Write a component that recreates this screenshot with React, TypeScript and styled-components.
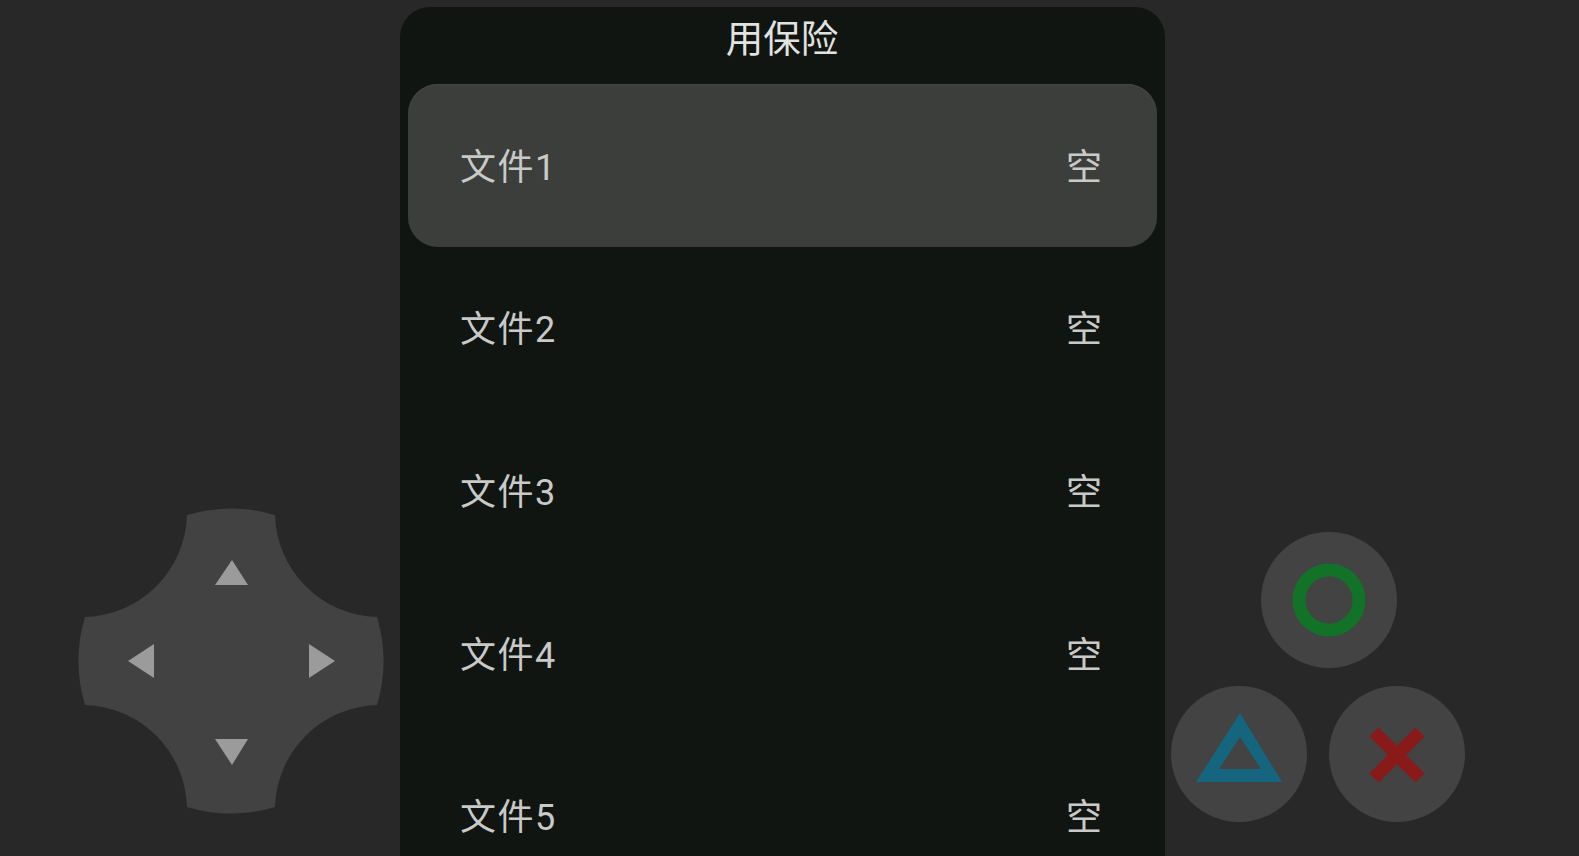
import React from 'react';
import styled, { createGlobalStyle } from 'styled-components';

const GlobalStyle = createGlobalStyle`
  html, body {
    margin: 0;
    height: 100%;
    background: #282828;
    overflow: hidden;
  }
`;

const Screen = styled.div`
  display: grid;
  grid-template-columns: 400px 765px 1fr;
  height: 856px;
  background: #282828;
  font-family: Roboto, "Noto Sans CJK SC", sans-serif;
  overflow: hidden;
`;

const LeftSide = styled.div`
  display: flex;
  align-items: flex-end;
  padding: 0 0 42px 78px;
`;

const RightSide = styled.div`
  display: flex;
  flex-direction: column;
  justify-content: flex-end;
  gap: 18px;
  padding: 0 0 34px 6px;
`;

const Panel = styled.div`
  margin-top: 7px;
  height: 849px;
  background: #101512;
  border-radius: 30px 30px 0 0;
  padding: 0 8px;
  box-sizing: border-box;
  overflow: hidden;
`;

const Title = styled.div`
  height: 77px;
  padding: 10px 1px 0 0;
  box-sizing: border-box;
  text-align: center;
  font-size: 37.5px;
  line-height: 44px;
  color: #e2e3e1;
`;

const Row = styled.div<{ $selected?: boolean }>`
  display: flex;
  justify-content: space-between;
  align-items: center;
  flex: none;
  height: 162.6px;
  padding: 0 55px 3px 52px;
  box-sizing: border-box;
  border-radius: 30px;
  font-size: 36px;
  color: #c9cac8;
  background: ${(p) => (p.$selected ? '#3c3e3b' : 'transparent')};
  box-shadow: ${(p) => (p.$selected ? 'inset 0 1px 0 #464845' : 'none')};
`;

const FileName = styled.span`
  letter-spacing: 1.5px;
`;

const Pad = styled.svg`
  display: block;
  width: 306px;
  height: 306px;
`;

const ButtonRow = styled.div<{ $offset?: number }>`
  display: flex;
  gap: 22px;
  margin-left: ${(p) => p.$offset || 0}px;
`;

const RoundButton = styled.svg`
  display: block;
  flex: none;
  width: 136px;
  height: 136px;
`;

const files = ['文件1', '文件2', '文件3', '文件4', '文件5'];

const App = () => (
  <Screen>
    <GlobalStyle />
    <LeftSide>
      <Pad viewBox="-153 -153 306 306">
        <path
          d="M-44 -146A153 153 0 0 1 44 -146A105 105 0 0 0 146 -44A153 153 0 0 1 146 44A105 105 0 0 0 44 146A153 153 0 0 1 -44 146A105 105 0 0 0 -146 44A153 153 0 0 1 -146 -44A105 105 0 0 0 -44 -146Z"
          fill="#414241"
        />
        <g fill="#9b9b9c">
          <polygon points="1,-101 -16,-76 17,-76" />
          <polygon points="-103,0 -77,-17 -77,17" />
          <polygon points="104,0 78,-17 78,17" />
          <polygon points="1,104 -16,78 17,78" />
        </g>
      </Pad>
    </LeftSide>

    <Panel>
      <Title>用保险</Title>
      {files.map((name, i) => (
        <Row key={name} $selected={i === 0}>
          <FileName>{name}</FileName>
          <span>空</span>
        </Row>
      ))}
    </Panel>

    <RightSide>
      <ButtonRow $offset={90}>
        <RoundButton viewBox="0 0 136 136">
          <circle cx="68" cy="68" r="68" fill="#424342" />
          <circle cx="68" cy="68" r="30" fill="none" stroke="#127228" strokeWidth="13" />
        </RoundButton>
      </ButtonRow>
      <ButtonRow>
        <RoundButton viewBox="0 0 136 136">
          <circle cx="68" cy="68" r="68" fill="#424342" />
          <path
            d="M69 27L111 96H25ZM69 51L48 83H90Z"
            fill="#15657f"
            fillRule="evenodd"
          />
        </RoundButton>
        <RoundButton viewBox="0 0 136 136">
          <circle cx="68" cy="68" r="68" fill="#424342" />
          <path d="M45 46L91 92M91 46L45 92" stroke="#8a1a1a" strokeWidth="13" fill="none" />
        </RoundButton>
      </ButtonRow>
    </RightSide>
  </Screen>
);

export default App;
